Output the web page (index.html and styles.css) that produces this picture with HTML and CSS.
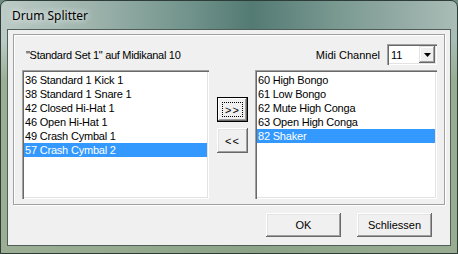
FILE: index.html
```html
<!DOCTYPE html>
<html lang="de">
<head>
  <meta charset="UTF-8">
  <title>Drum Splitter</title>
  <link rel="stylesheet" href="styles.css">
</head>
<body>

  <div class="window">
    <div class="titlebar">
      <span class="title">Drum Splitter</span>
    </div>

    <div class="client">
      <div class="group">
        <div class="head-row">
          <span class="set-label">"Standard Set 1" auf Midikanal 10</span>
          <div class="channel">
            <span>Midi Channel</span>
            <div class="combo">
              <span class="combo-value">11</span>
              <span class="combo-btn">
                <svg width="7" height="4" viewBox="0 0 7 4"><path d="M0 0H7L3.5 4Z" fill="#000"/></svg>
              </span>
            </div>
          </div>
        </div>

        <div class="lists">
          <ul class="listbox list-left">
            <li>36 Standard 1 Kick 1</li>
            <li>38 Standard 1 Snare 1</li>
            <li>42 Closed Hi-Hat 1</li>
            <li>46 Open Hi-Hat 1</li>
            <li>49 Crash Cymbal 1</li>
            <li class="selected">57 Crash Cymbal 2</li>
          </ul>

          <div class="move-btns">
            <button class="btn btn-move focused"><span class="focus-rect">&gt;&gt;</span></button>
            <button class="btn btn-move">&lt;&lt;</button>
          </div>

          <ul class="listbox list-right">
            <li>60 High Bongo</li>
            <li>61 Low Bongo</li>
            <li>62 Mute High Conga</li>
            <li>63 Open High Conga</li>
            <li class="selected">82 Shaker</li>
          </ul>
        </div>
      </div>

      <div class="footer">
        <button class="btn btn-dialog">OK</button>
        <button class="btn btn-dialog">Schliessen</button>
      </div>
    </div>
  </div>

</body>
</html>
```

FILE: styles.css
```css
body {
  margin: 0;
  background-color: #6f8a80;
  font-family: "Liberation Sans", Arial, sans-serif;
  font-size: 11px;
  color: #000;
}

.window {
  width: 458px;
  height: 254px;
  box-sizing: border-box;
  border: 1px solid #2f3d38;
  border-radius: 7px 7px 0 0;
  padding: 0 6px 7px 6px;
  background:
    linear-gradient(180deg, rgba(0, 0, 0, 0) 0, rgba(0, 0, 0, 0) 40px, rgba(150, 170, 140, 0.85) 80px),
    linear-gradient(90deg, #bccbc6 0%, #9db3ac 20%, #6f928a 42%, #537a73 55%, #7c9b93 75%, #98aea8 90%, #aabdb7 100%);
  display: flex;
  flex-direction: column;
}

.titlebar {
  height: 28px;
  display: flex;
  align-items: center;
  padding-left: 5px;
}

.title {
  font-family: "Noto Sans", sans-serif;
  font-size: 12px;
  text-shadow: 0 0 6px rgba(255, 255, 255, 0.9), 0 0 10px rgba(255, 255, 255, 0.6);
}

.client {
  flex: 1;
  background-color: #f0f0f0;
  border: 1px solid #4f5f58;
  padding: 4px 5px 0 5px;
  display: flex;
  flex-direction: column;
}

/* etched group frame */
.group {
  border: 1px solid #a0a0a0;
  box-shadow: inset 1px 1px #fff, 1px 1px #fff;
  padding: 9px 7px 5px 8px;
}

.head-row {
  display: flex;
  justify-content: space-between;
  align-items: center;
  height: 21px;
  margin-bottom: 5px;
}

.set-label {
  padding-left: 4px;
  letter-spacing: -0.3px;
}

.channel {
  display: flex;
  align-items: center;
  gap: 7px;
}

.combo {
  width: 50px;
  height: 21px;
  box-sizing: border-box;
  background-color: #fff;
  box-shadow: inset 1px 1px #a0a0a0, inset 2px 2px #696969, inset -1px -1px #fff, inset -2px -2px #e3e3e3;
  display: flex;
  align-items: center;
  justify-content: space-between;
  padding: 2px;
}

.combo-value {
  padding-left: 2px;
}

.combo-btn {
  width: 16px;
  height: 17px;
  box-sizing: border-box;
  background-color: #f0f0f0;
  box-shadow: inset -1px -1px #696969, inset 1px 1px #e3e3e3, inset -2px -2px #a0a0a0, inset 2px 2px #fff;
  display: flex;
  align-items: center;
  justify-content: center;
}

.lists {
  display: flex;
  align-items: flex-start;
}

.listbox {
  list-style: none;
  margin: 0;
  height: 129px;
  box-sizing: border-box;
  padding: 3px 2px 2px 2px;
  background-color: #fff;
  box-shadow: inset 1px 1px #a0a0a0, inset 2px 2px #696969, inset -1px -1px #fff, inset -2px -2px #e3e3e3;
}

.list-left {
  width: 187px;
}

.list-right {
  width: 182px;
}

.listbox li {
  height: 14px;
  line-height: 14px;
  padding-left: 1px;
  letter-spacing: -0.2px;
  white-space: nowrap;
}

.listbox li.selected {
  background-color: #3399ff;
  color: #fff;
}

.move-btns {
  display: flex;
  flex-direction: column;
  gap: 6px;
  margin: 27px 7px 0 8px;
}

.btn {
  font-family: "Liberation Sans", Arial, sans-serif;
  font-size: 11px;
  color: #000;
  background-color: #f0f0f0;
  border: none;
  padding: 0;
  box-shadow: inset -1px -1px #696969, inset 1px 1px #fff, inset -2px -2px #a0a0a0, inset 2px 2px #e3e3e3;
  display: flex;
  align-items: center;
  justify-content: center;
}

.btn-move {
  width: 31px;
  height: 25px;
  letter-spacing: 1px;
}

.btn.focused {
  box-shadow: inset 0 0 0 1px #000, inset -2px -2px #696969, inset 2px 2px #fff, inset -3px -3px #a0a0a0;
}

.focus-rect {
  border: 1px dotted #000;
  width: 21px;
  height: 15px;
  display: flex;
  align-items: center;
  justify-content: center;
  box-sizing: border-box;
}

.footer {
  display: flex;
  justify-content: flex-end;
  gap: 16px;
  padding: 8px 13px 0 0;
}

.btn-dialog {
  width: 75px;
  height: 24px;
}
```
